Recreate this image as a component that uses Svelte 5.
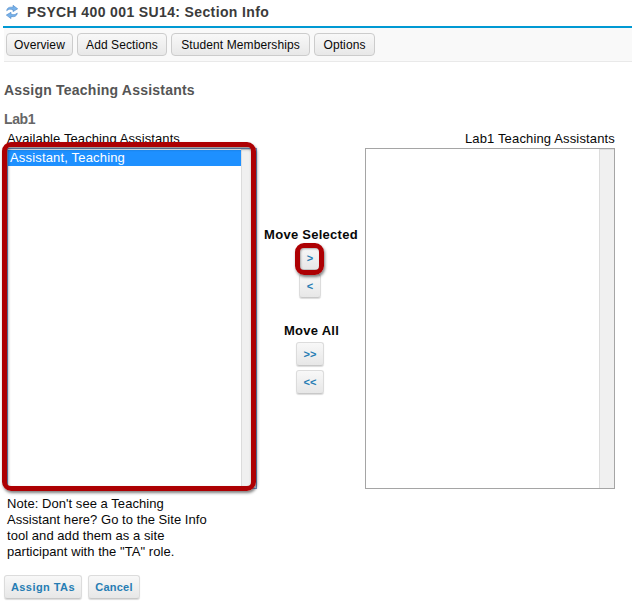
<script>
  const tabs = [
    { label: 'Overview', width: 67 },
    { label: 'Add Sections', width: 90 },
    { label: 'Student Memberships', width: 139 },
    { label: 'Options', width: 61 }
  ];
  const note = [
    "Note: Don't see a Teaching",
    'Assistant here? Go to the Site Info',
    'tool and add them as a site',
    'participant with the "TA" role.'
  ];
</script>

<main>
  <header>
    <svg class="refresh" width="12" height="14" viewBox="0 0 12 14">
      <path d="M0.7 5.7C1 2.6 3.6 1.7 7 2.4V0.3L11.7 3.8L7 6.6V4.7C4.4 3.8 2.7 4 .7 5.7Z" fill="#78b2ea" stroke="#4a86c7" stroke-width=".6" />
      <path d="M11.3 8.1C11 11.2 8.4 12.2 5 11.5V13.6L.3 10.1L5 7.3V9.2C7.6 10 9.3 9.8 11.3 8.1Z" fill="#78b2ea" stroke="#4a86c7" stroke-width=".6" />
    </svg>
    <h1>PSYCH 400 001 SU14: Section Info</h1>
  </header>
  <nav>
    {#each tabs as tab}
      <button class="tab" style="width: {tab.width}px">{tab.label}</button>
    {/each}
  </nav>
  <h2>Assign Teaching Assistants</h2>
  <h3>Lab1</h3>
  <section class="transfer">
    <div class="available">
      <div class="label">Available Teaching Assistants</div>
      <div class="list focused">
        <div class="options"><div class="selected">Assistant, Teaching</div></div>
        <div class="track"></div>
        <div class="highlight"></div>
      </div>
    </div>
    <div class="moves">
      <b class="caption">Move Selected</b>
      <div class="target"><button class="btn small">&gt;</button><div class="ring"></div></div>
      <button class="btn small">&lt;</button>
      <b class="caption all">Move All</b>
      <button class="btn wide">&gt;&gt;</button>
      <button class="btn wide">&lt;&lt;</button>
    </div>
    <div class="assigned">
      <div class="label right">Lab1 Teaching Assistants</div>
      <div class="list">
        <div class="options"></div>
        <div class="track"></div>
      </div>
    </div>
  </section>
  <div class="note">
    {#each note as line}<div>{line}</div>{/each}
  </div>
  <footer>
    <button class="btn assign">Assign TAs</button>
    <button class="btn cancel">Cancel</button>
  </footer>
</main>

<style>
  :global(body) { margin: 0; background: #fff; }
  main { width: 632px; height: 605px; overflow: hidden; font: 13px/16px "Liberation Sans", Arial, sans-serif; color: #080808; }
  main, main * { box-sizing: border-box; }
  h1, h2, h3 { margin: 0; white-space: nowrap; }
  header { display: flex; height: 28px; margin-left: 3px; border-bottom: 2px solid #0099d3; }
  .refresh { margin: 5px 0 0 3px; flex: none; }
  h1 { margin-left: 9px; font-size: 14px; line-height: 24px; color: #3b3b3b; letter-spacing: .37px; }
  nav { display: flex; gap: 4px; height: 34px; margin-left: 4px; padding: 5px 0 0 2px; background: #f9f9f9; border-bottom: 1px solid #e9e9e9; }
  button { margin: 0; padding: 0; font-family: inherit; white-space: nowrap; display: block; }
  .tab { height: 23px; border: 1px solid #ccc; border-radius: 4px; background: linear-gradient(#f8f8f8, #e8e8e8); color: #080808; font-size: 12px; line-height: 20px; letter-spacing: .1px; }
  h2 { margin: 19px 0 0 4px; height: 18px; font-size: 14px; line-height: 18px; color: #555; letter-spacing: .22px; }
  h3 { margin: 11px 0 0 4px; height: 18px; font-size: 14px; line-height: 18px; color: #666; letter-spacing: -.4px; }
  .transfer { display: flex; height: 361px; padding-left: 7px; }
  .available { width: 250px; }
  .label { height: 20px; line-height: 20px; padding-top: 1px; letter-spacing: .1px; white-space: nowrap; }
  .label.right { text-align: right; letter-spacing: .15px; }
  .list { position: relative; display: flex; height: 341px; border: 1px solid #a5a5a5; }
  .focused { border-color: #7597ce; }
  .options { flex: 1; padding-top: 1px; }
  .selected { height: 16px; background: #1e90ff; color: #fff; padding-left: 2px; line-height: 15px; letter-spacing: .17px; white-space: nowrap; }
  .track { width: 15px; background: #f0f0f0; border-left: 1px solid #dcdcdc; border-top: 1px solid #ddd; }
  .highlight { position: absolute; left: -6px; top: -7px; width: 254px; height: 349px; border: 5px solid #ad0003; border-radius: 9px; box-shadow: 1px 2px 3px rgba(0,0,0,.5), inset 1px 2px 3px rgba(0,0,0,.45); }
  .moves { width: 108px; display: flex; flex-direction: column; align-items: center; padding: 97px 2px 0 0; }
  .caption { height: 20px; line-height: 20px; margin: 0 0 1px 2px; letter-spacing: .27px; white-space: nowrap; }
  .btn { border: 1px solid #dcdcdc; border-bottom-color: #c8c8c8; border-radius: 3px; background: linear-gradient(#f8f8f8, #e7e7e7); box-shadow: 0 1px 1px rgba(0,0,0,.14); color: #267db4; font-size: 11px; font-weight: bold; line-height: 22px; height: 24px; }
  .small { width: 22px; margin-bottom: 4px; }
  .target { position: relative; }
  .ring { position: absolute; left: -4px; top: -3px; width: 29px; height: 32px; border: 5px solid #ad0003; border-radius: 9px; box-shadow: 1px 2px 3px rgba(0,0,0,.5), inset 1px 1px 2px rgba(0,0,0,.3); }
  .moves .caption.all { margin: 19px 0 1px 3px; }
  .wide { width: 28px; margin-bottom: 4px; }
  .assigned { width: 250px; }
  .note { padding: 7px 0 0 7px; height: 86px; letter-spacing: .05px; white-space: nowrap; }
  footer { display: flex; gap: 6px; padding-left: 4px; }
  .assign { width: 78px; letter-spacing: .45px; }
  .cancel { width: 52px; letter-spacing: .2px; }
</style>
